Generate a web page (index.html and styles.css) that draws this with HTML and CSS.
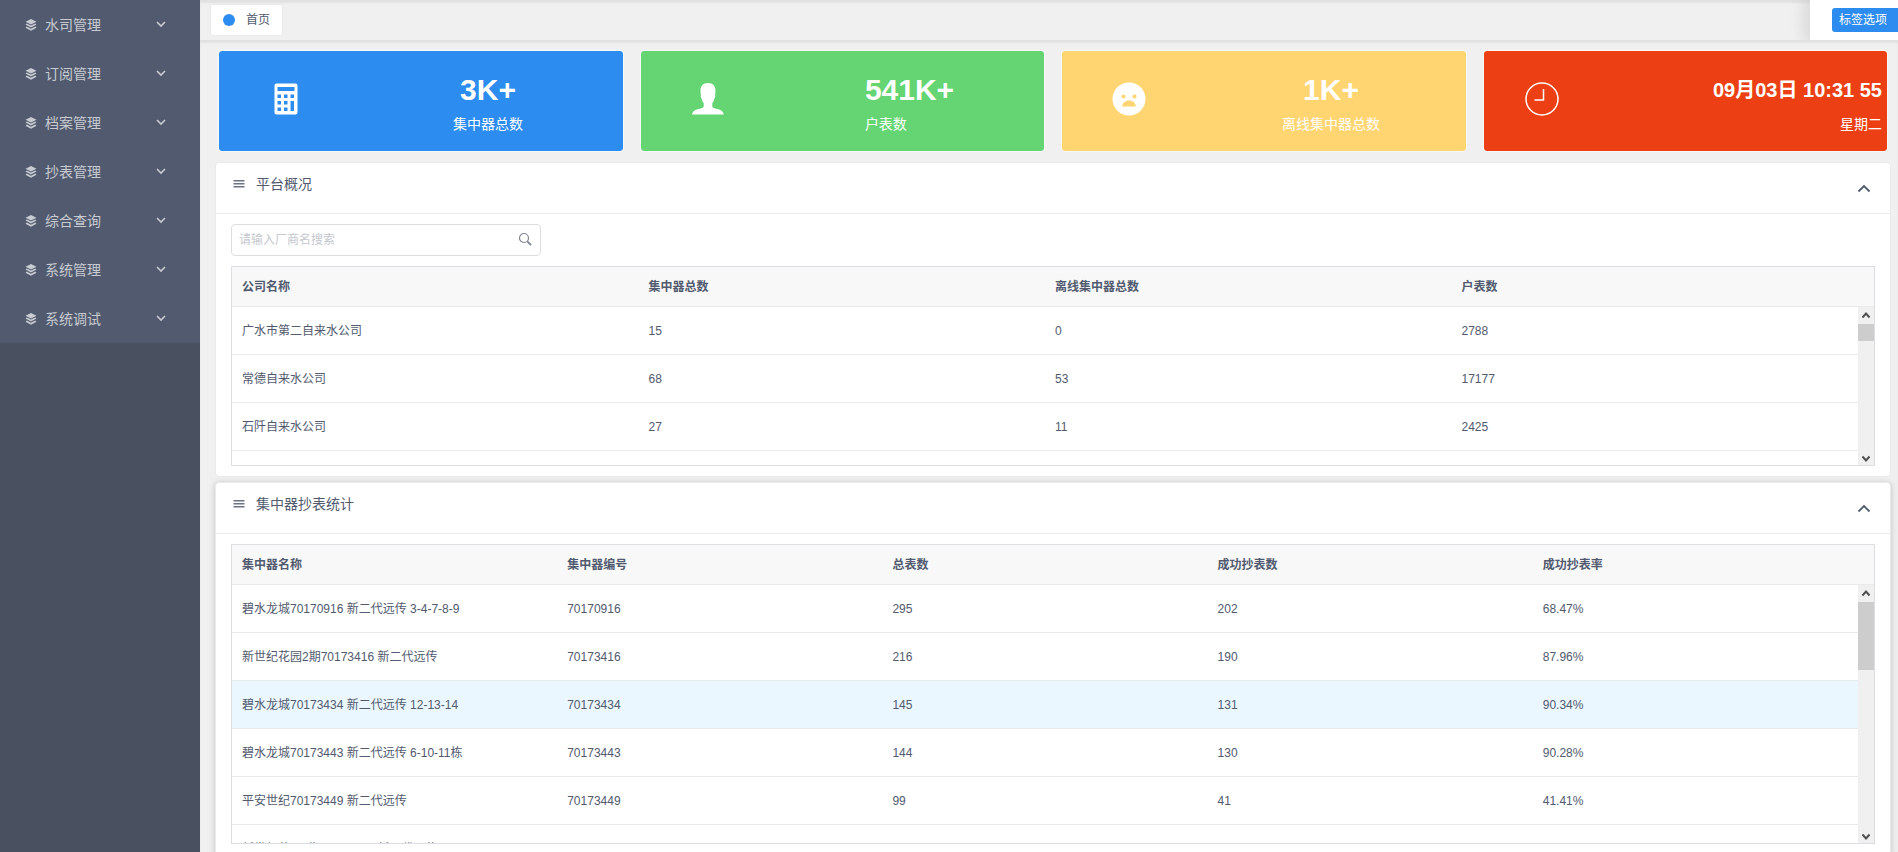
FILE: index.html
```html
<!DOCTYPE html>
<html lang="zh-CN">
<head>
  <meta charset="utf-8">
  <title>首页</title>
  <link rel="stylesheet" href="styles.css">
</head>
<body>
  <svg class="sprite" aria-hidden="true">
    <symbol id="icon-layers" viewBox="0 0 12 12">
      <path d="M6 0 11.500 2.800 6 5.500 0.500 2.800Z M1.800 4.500 6 6.600l4.200-2.100L11.500 5.600 6 8.600 0.500 5.600Z M1.800 7.500 6 9.700l4.200-2.200L11.500 8.700 6 11.700 0.500 8.700Z"/>
    </symbol>
    <symbol id="icon-down" viewBox="0 0 10 10">
      <path d="M1 3l4 4 4-4" fill="none" stroke="currentColor" stroke-width="1.6"/>
    </symbol>
    <symbol id="icon-up" viewBox="0 0 14 14">
      <path d="M1.500 10.500 7 5l5.500 5.500" fill="none" stroke="currentColor" stroke-width="1.8"/>
    </symbol>
    <symbol id="icon-menu" viewBox="0 0 12 12">
      <path d="M0.500 2h11v1.500h-11ZM0.500 5h11v1.500h-11ZM0.500 8h11v1.500h-11Z"/>
    </symbol>
  </svg>

  <div class="layout">
    <aside class="sidebar">
      <nav class="menu">
        <button type="button" class="menu-item"><svg class="menu-icon"><use href="#icon-layers"/></svg><span class="menu-text">水司管理</span><svg class="menu-arrow"><use href="#icon-down"/></svg></button>
        <button type="button" class="menu-item"><svg class="menu-icon"><use href="#icon-layers"/></svg><span class="menu-text">订阅管理</span><svg class="menu-arrow"><use href="#icon-down"/></svg></button>
        <button type="button" class="menu-item"><svg class="menu-icon"><use href="#icon-layers"/></svg><span class="menu-text">档案管理</span><svg class="menu-arrow"><use href="#icon-down"/></svg></button>
        <button type="button" class="menu-item"><svg class="menu-icon"><use href="#icon-layers"/></svg><span class="menu-text">抄表管理</span><svg class="menu-arrow"><use href="#icon-down"/></svg></button>
        <button type="button" class="menu-item"><svg class="menu-icon"><use href="#icon-layers"/></svg><span class="menu-text">综合查询</span><svg class="menu-arrow"><use href="#icon-down"/></svg></button>
        <button type="button" class="menu-item"><svg class="menu-icon"><use href="#icon-layers"/></svg><span class="menu-text">系统管理</span><svg class="menu-arrow"><use href="#icon-down"/></svg></button>
        <button type="button" class="menu-item"><svg class="menu-icon"><use href="#icon-layers"/></svg><span class="menu-text">系统调试</span><svg class="menu-arrow"><use href="#icon-down"/></svg></button>
      </nav>
    </aside>

    <div class="main">
      <header class="tags">
        <a class="tag" href="#"><span class="tag-dot"></span>首页</a>
        <div class="tags-options">
          <button type="button" class="options-button">标签选项</button>
        </div>
      </header>

      <main class="page">
        <section class="cards">
          <div class="card card-blue">
            <div class="card-icon">
              <svg width="34" height="34" viewBox="0 0 34 34">
                <path fill="#fff" fill-rule="evenodd" d="M7.500 1.500h19a2 2 0 0 1 2 2v27a2 2 0 0 1-2 2h-19a2 2 0 0 1-2-2v-27a2 2 0 0 1 2-2Z M8.500 5v4h17V5Z M8.500 12.500v3.500H12v-3.500Z M15 12.500v3.500h3.500v-3.500Z M21.500 12.500v3.500H25v-3.500Z M8.500 19v3.500H12V19Z M15 19v3.500h3.500V19Z M21.500 19v10H25V19Z M8.500 25.500V29H12v-3.500Z M15 25.500V29h3.500v-3.500Z"/>
              </svg>
            </div>
            <div class="card-info"><div><p class="card-count">3K+</p><p class="card-label">集中器总数</p></div></div>
          </div>
          <div class="card card-green">
            <div class="card-icon">
              <svg width="34" height="34" viewBox="0 0 34 34">
                <path fill="#fff" d="M17 1c5 0 7.500 3 7.500 7.500 0 2-.2 3-.5 4.500.6.400.4 2-.6 3.500-.5 2-1.100 3.500-2.100 4.500v3.500c0 1.200 2 2 5 2.600 4 .8 6 2.400 6.500 5.400H1c.5-3 2.500-4.600 6.500-5.400 3-.6 5.200-1.400 5.200-2.600V21c-1-1-1.600-2.500-2.100-4.500-1-1.500-1.200-3.100-.6-3.500-.3-1.500-.5-2.500-.5-4.500C9.500 4 12 1 17 1Z"/>
              </svg>
            </div>
            <div class="card-info"><div><p class="card-count">541K+</p><p class="card-label">户表数</p></div></div>
          </div>
          <div class="card card-yellow">
            <div class="card-icon">
              <svg width="34" height="34" viewBox="0 0 34 34">
                <circle cx="17" cy="17" r="16.500" fill="#fff"/>
                <g fill="#ffd572">
                  <circle cx="11.500" cy="14.500" r="2"/>
                  <circle cx="22.500" cy="14.500" r="2"/>
                  <path d="M10 24.500c.5-3.500 3.500-6 7-6s6.500 2.500 7 6Z"/>
                </g>
              </svg>
            </div>
            <div class="card-info"><div><p class="card-count">1K+</p><p class="card-label">离线集中器总数</p></div></div>
          </div>
          <div class="card card-red">
            <div class="card-icon">
              <svg width="34" height="34" viewBox="0 0 34 34" fill="none" stroke="#fff" stroke-width="1.500">
                <circle cx="17" cy="17" r="16"/>
                <path d="M18.500 7v11H9.500"/>
              </svg>
            </div>
            <div class="card-info"><div><p class="card-time">09月03日 10:31 55</p><p class="card-label">星期二</p></div></div>
          </div>
        </section>

        <section class="panel">
          <div class="panel-head">
            <h2 class="panel-title"><svg class="panel-icon"><use href="#icon-menu"/></svg>平台概况</h2>
            <button type="button" class="panel-toggle" aria-label="收起"><svg width="14" height="14"><use href="#icon-up"/></svg></button>
          </div>
          <div class="panel-body">
            <div class="search">
              <input class="search-input" type="text" placeholder="请输入厂商名搜索" aria-label="厂商名">
              <svg class="search-icon" viewBox="0 0 14 14" fill="none" stroke="currentColor">
                <circle cx="6" cy="6" r="4.500" stroke-width="1.200"/>
                <path d="M9.300 9.300 13 13" stroke-width="1.800"/>
              </svg>
            </div>
            <div class="grid">
              <div class="grid-scroll grid-short">
                <table class="table">
                  <thead>
                    <tr><th>公司名称</th><th>集中器总数</th><th>离线集中器总数</th><th>户表数</th></tr>
                  </thead>
                  <tbody>
                    <tr><td>广水市第二自来水公司</td><td>15</td><td>0</td><td>2788</td></tr>
                    <tr><td>常德自来水公司</td><td>68</td><td>53</td><td>17177</td></tr>
                    <tr><td>石阡自来水公司</td><td>27</td><td>11</td><td>2425</td></tr>
                    <tr><td></td><td></td><td></td><td></td></tr>
                  </tbody>
                </table>
              </div>
              <div class="scrollbar" aria-hidden="true">
                <svg class="scroll-arrow" viewBox="0 0 16 17"><path d="M4.500 10.500 8 6.500l3.500 4"/></svg>
                <div class="scroll-track"><div class="scroll-thumb thumb-small"></div></div>
                <svg class="scroll-arrow" viewBox="0 0 16 17"><path d="M4.500 8.500l3.500 4 3.500-4"/></svg>
              </div>
            </div>
          </div>
        </section>

        <section class="panel panel-active">
          <div class="panel-head">
            <h2 class="panel-title"><svg class="panel-icon"><use href="#icon-menu"/></svg>集中器抄表统计</h2>
            <button type="button" class="panel-toggle" aria-label="收起"><svg width="14" height="14"><use href="#icon-up"/></svg></button>
          </div>
          <div class="panel-body">
            <div class="grid">
              <div class="grid-scroll grid-tall">
                <table class="table">
                  <thead>
                    <tr><th>集中器名称</th><th>集中器编号</th><th>总表数</th><th>成功抄表数</th><th>成功抄表率</th></tr>
                  </thead>
                  <tbody>
                    <tr><td>碧水龙城70170916 新二代远传 3-4-7-8-9</td><td>70170916</td><td>295</td><td>202</td><td>68.47%</td></tr>
                    <tr><td>新世纪花园2期70173416 新二代远传</td><td>70173416</td><td>216</td><td>190</td><td>87.96%</td></tr>
                    <tr class="row-hover"><td>碧水龙城70173434 新二代远传 12-13-14</td><td>70173434</td><td>145</td><td>131</td><td>90.34%</td></tr>
                    <tr><td>碧水龙城70173443 新二代远传 6-10-11栋</td><td>70173443</td><td>144</td><td>130</td><td>90.28%</td></tr>
                    <tr><td>平安世纪70173449 新二代远传</td><td>70173449</td><td>99</td><td>41</td><td>41.41%</td></tr>
                    <tr><td>新世纪花园2期70173450 新二代远传</td><td></td><td></td><td></td><td></td></tr>
                  </tbody>
                </table>
              </div>
              <div class="scrollbar" aria-hidden="true">
                <svg class="scroll-arrow" viewBox="0 0 16 17"><path d="M4.500 10.500 8 6.500l3.500 4"/></svg>
                <div class="scroll-track"><div class="scroll-thumb thumb-large"></div></div>
                <svg class="scroll-arrow" viewBox="0 0 16 17"><path d="M4.500 8.500l3.500 4 3.500-4"/></svg>
              </div>
            </div>
          </div>
        </section>
      </main>
    </div>
  </div>
</body>
</html>
```

FILE: styles.css
```css
* {
  box-sizing: border-box;
  margin: 0;
  padding: 0;
}

body {
  font-family: "Liberation Sans", "Noto Sans CJK SC", sans-serif;
  font-size: 12px;
  line-height: 18px;
  color: #515a6e;
  background: #f0f0f0;
}

button,
input {
  font: inherit;
  border: none;
}

button {
  cursor: pointer;
}

.sprite {
  display: none;
}

.layout {
  display: flex;
  height: 100vh;
  overflow: hidden;
}

/* Sidebar */

.sidebar {
  flex: none;
  width: 200px;
  background: #495060;
}

.menu {
  display: flex;
  flex-direction: column;
  background: #515a6e;
}

.menu-item {
  display: flex;
  align-items: center;
  height: 49px;
  padding: 0 34px 0 25px;
  font-size: 14px;
  color: #c8cbd2;
  background: none;
}

.menu-icon {
  width: 12px;
  height: 12px;
  margin-right: 8px;
  fill: currentColor;
}

.menu-text {
  flex: 1;
  text-align: left;
}

.menu-arrow {
  width: 10px;
  height: 10px;
  margin-bottom: 2px;
}

/* Tags bar */

.main {
  flex: 1;
  min-width: 0;
}

.tags {
  display: flex;
  justify-content: space-between;
  height: 40px;
  padding-left: 10px;
  overflow: hidden;
  box-shadow: inset 0 3px 2px 0 rgba(100, 100, 100, 0.1);
}

.tag {
  display: flex;
  align-items: center;
  height: 32px;
  margin-top: 4px;
  padding: 0 12px;
  color: #515a6e;
  text-decoration: none;
  background: #fff;
  border: 1px solid #e8eaec;
  border-radius: 3px;
}

.tag-dot {
  width: 12px;
  height: 12px;
  margin-right: 11px;
  border-radius: 50%;
  background: #2d8cf0;
}

.tags-options {
  display: flex;
  align-items: flex-start;
  padding: 8px 0 0 22px;
  background: #fff;
  box-shadow: -3px 0 15px 3px rgba(0, 0, 0, 0.1);
}

.options-button {
  height: 24px;
  padding: 0 11px 0 7px;
  color: #fff;
  background: #2d8cf0;
  border-radius: 3px 0 0 3px;
}

/* Page */

.page {
  padding: 10px 7px 10px 15px;
  box-shadow: inset 0 3px 2px 0 rgba(100, 100, 100, 0.1);
}

.cards {
  display: flex;
  gap: 16px;
  padding: 0 3px;
  margin-bottom: 10px;
}

.card {
  flex: 1;
  display: flex;
  align-items: center;
  height: 102px;
  color: #fff;
  background-clip: padding-box;
  border: 1px solid rgba(255, 255, 255, 0.5);
  border-radius: 4px;
}

.card-blue {
  background-color: #2d8cf0;
}

.card-green {
  background-color: #64d572;
}

.card-yellow {
  background-color: #ffd572;
}

.card-red {
  background-color: #ed3f14;
}

.card-icon {
  flex: 1;
  display: flex;
  justify-content: center;
  padding-bottom: 5px;
}

.card-info {
  flex: 2;
  display: flex;
  justify-content: center;
  padding-top: 5px;
}

.card-red .card-icon {
  flex: none;
  width: 116px;
}

.card-red .card-info {
  flex: 1;
  justify-content: flex-end;
  padding-right: 5px;
  text-align: right;
}

.card-count,
.card-time {
  font-weight: bold;
  line-height: 40px;
}

.card-count {
  font-size: 30px;
  text-align: center;
}

.card-time {
  font-size: 20px;
}

.card-label {
  font-size: 14px;
  line-height: 28px;
}

/* Panels */

.panel {
  margin-bottom: 5px;
  background: #fff;
  border: 1px solid #e8eaec;
  border-radius: 4px;
}

.panel-active {
  box-shadow: 0 1px 6px rgba(0, 0, 0, 0.2);
}

.panel-head {
  display: flex;
  align-items: center;
  justify-content: space-between;
  height: 51px;
  padding: 0 19px 0 17px;
  border-bottom: 1px solid #e8eaec;
}

.panel-title {
  display: flex;
  align-items: center;
  padding-bottom: 8px;
  font-size: 14px;
  font-weight: normal;
}

.panel-icon {
  width: 12px;
  height: 12px;
  margin-right: 11px;
  fill: #6b7385;
}

.panel-toggle {
  display: flex;
  color: #515a6e;
  background: none;
}

.panel-body {
  padding: 10px 15px;
}

.search {
  position: relative;
  width: 310px;
  margin-bottom: 10px;
}

.search-input {
  display: block;
  width: 100%;
  height: 32px;
  padding: 0 32px 0 7px;
  color: #515a6e;
  border: 1px solid #dcdee2;
  border-radius: 4px;
}

.search-input::placeholder {
  color: #c5c8ce;
}

.search-icon {
  position: absolute;
  top: 8px;
  right: 9px;
  width: 14px;
  height: 14px;
  color: #808695;
}

/* Tables */

.grid {
  display: flex;
  border: 1px solid #dcdee2;
  background: linear-gradient(#f8f8f9 40px, #fff 40px);
}

.grid-scroll {
  flex: 1;
  overflow: hidden;
}

.grid-short {
  height: 198px;
}

.grid-tall {
  height: 298px;
}

.table {
  width: 100%;
  table-layout: fixed;
  border-collapse: separate;
  border-spacing: 0;
}

.table th,
.table td {
  height: 48px;
  padding: 0 10px;
  text-align: left;
  white-space: nowrap;
  background: #fff;
  border-bottom: 1px solid #e8eaec;
}

.table th {
  height: 40px;
  background: #f8f8f9;
}

.table .row-hover td {
  background: #ebf7ff;
}

.scrollbar {
  display: flex;
  flex-direction: column;
  width: 16px;
  margin-top: 39px;
  border-top: 1px solid #e8eaec;
  background: #f0f0f0;
}

.scroll-arrow {
  flex: none;
  width: 16px;
  height: 17px;
  fill: none;
  stroke: #505050;
  stroke-width: 2;
}

.scroll-track {
  flex: 1;
}

.scroll-thumb {
  background: #cdcdcd;
}

.thumb-small {
  height: 17px;
}

.thumb-large {
  height: 68px;
}
```
